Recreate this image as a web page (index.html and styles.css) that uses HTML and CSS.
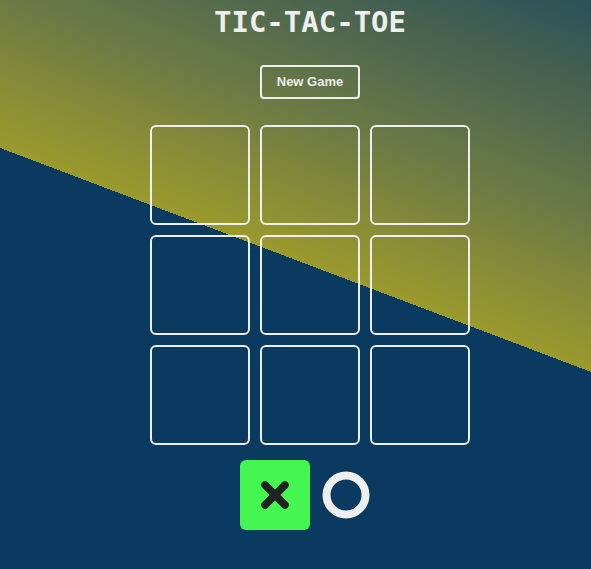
FILE: index.html
```html
<!DOCTYPE html>
<html lang="en">
<head>
<meta charset="utf-8">
<title>Tic-Tac-Toe</title>
<link rel="stylesheet" href="styles.css">
</head>
<body>
<main class="app">
  <h1 class="title">TIC-TAC-TOE</h1>
  <button class="new-game" type="button">New Game</button>
  <div class="board">
    <div class="cell"></div>
    <div class="cell"></div>
    <div class="cell"></div>
    <div class="cell"></div>
    <div class="cell"></div>
    <div class="cell"></div>
    <div class="cell"></div>
    <div class="cell"></div>
    <div class="cell"></div>
  </div>
  <div class="players">
    <div class="player player-x active">
      <svg width="70" height="70" viewBox="0 0 70 70" aria-hidden="true">
        <line x1="25" y1="25" x2="45" y2="45" stroke="#222" stroke-width="7.5" stroke-linecap="round"/>
        <line x1="45" y1="25" x2="25" y2="45" stroke="#222" stroke-width="7.5" stroke-linecap="round"/>
      </svg>
    </div>
    <div class="player player-o">
      <svg width="48" height="48" viewBox="0 0 48 48" aria-hidden="true">
        <circle cx="24" cy="24" r="19.5" fill="none" stroke="#eeeeee" stroke-width="8"/>
      </svg>
    </div>
  </div>
</main>
</body>
</html>
```

FILE: styles.css
```css
html {
  height: 100%;
  background: linear-gradient(200.76deg, #2b5158 0%, #6c7a45 28%, #9b9a2d 46.9%, #0b3a61 46.9%, #0b3a61 100%);
}

body {
  margin: 0;
  height: 100%;
}

.app {
  display: flex;
  flex-direction: column;
  align-items: center;
  padding: 5px 0 0 29px;
}

.title {
  margin: 0;
  font-family: "DejaVu Sans Mono", monospace;
  font-weight: bold;
  font-size: 29px;
  line-height: 34px;
  color: #eeeeee;
}

.new-game {
  margin-top: 26px;
  width: 100px;
  height: 34px;
  padding: 0;
  background: transparent;
  border: 2px solid #eeeeee;
  border-radius: 4px;
  color: #eeeeee;
  font-family: "Liberation Sans", Arial, sans-serif;
  font-weight: bold;
  font-size: 13px;
  line-height: 30px;
}

.board {
  margin-top: 26px;
  display: grid;
  grid-template-columns: repeat(3, 100px);
  grid-template-rows: repeat(3, 100px);
  gap: 10px;
}

.cell {
  box-sizing: border-box;
  border: 2px solid #eeeeee;
  border-radius: 6px;
}

.players {
  margin-top: 15px;
  margin-right: 11px;
  display: flex;
  align-items: center;
  gap: 12px;
}

.player {
  display: flex;
  align-items: center;
  justify-content: center;
}

.player-x {
  width: 70px;
  height: 70px;
  border-radius: 6px;
}

.player-x.active {
  background: #45f552;
}

.player-o {
  width: 48px;
  height: 48px;
}
```
